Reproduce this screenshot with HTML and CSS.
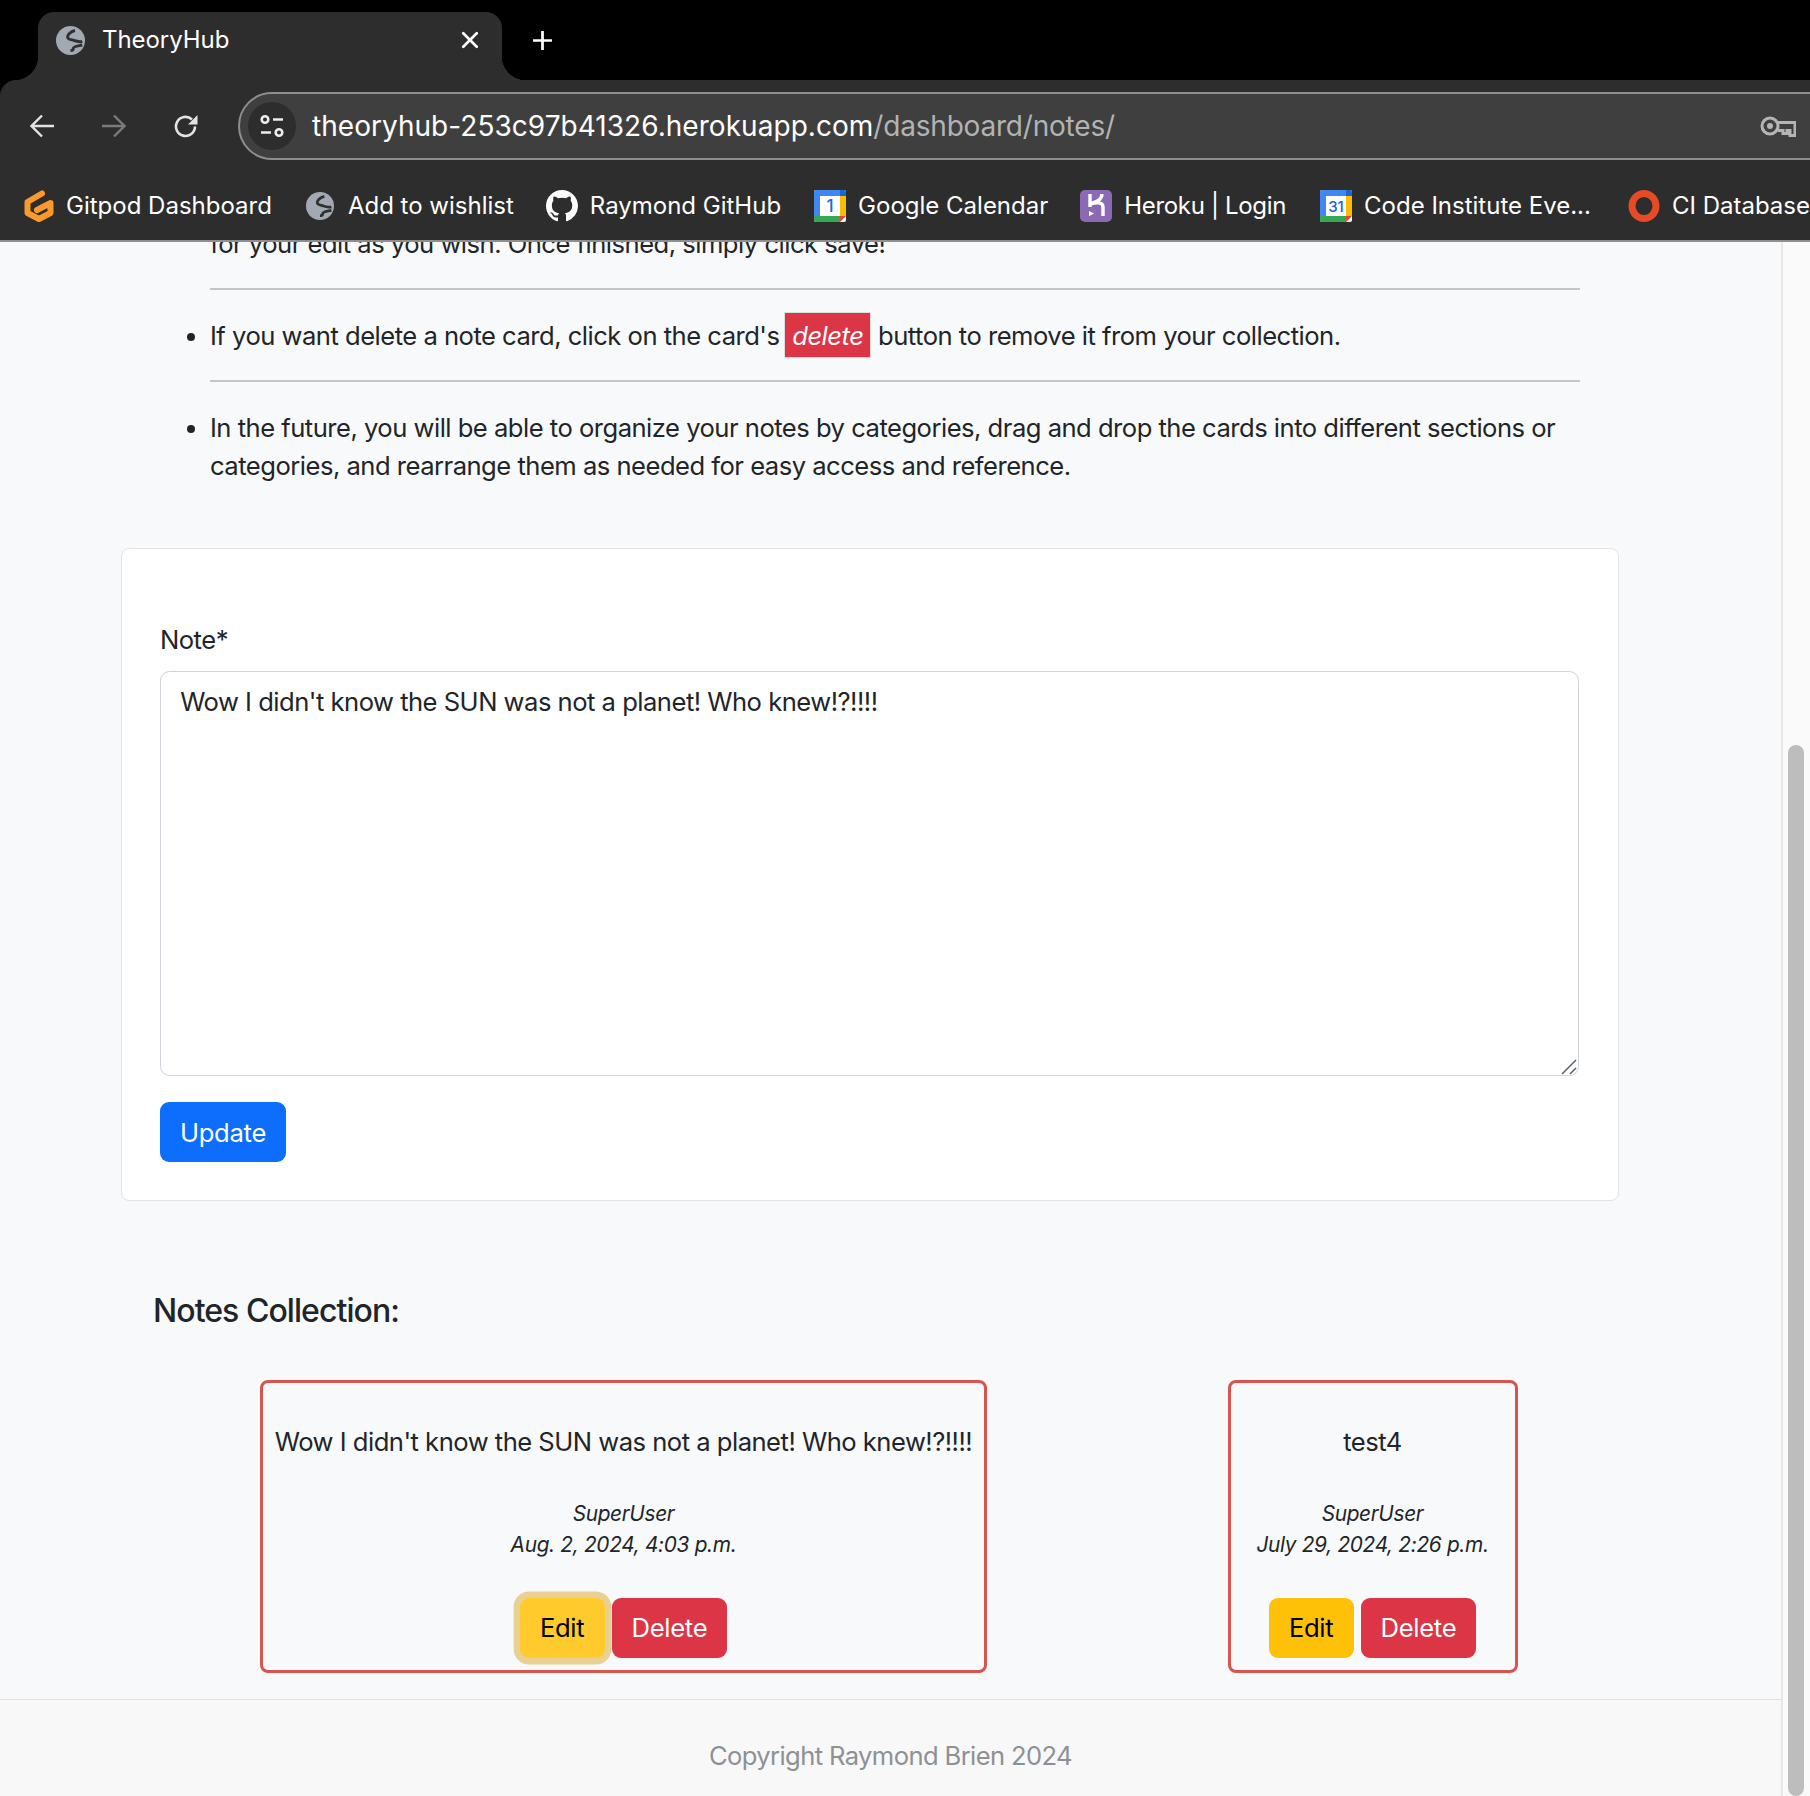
FILE: index.html
```html
<!DOCTYPE html>
<html lang="en">
<head>
<meta charset="utf-8">
<title>TheoryHub</title>
<link rel="stylesheet" href="styles.css">
</head>
<body>
<svg class="defs" width="0" height="0" aria-hidden="true">
  <symbol id="globe" viewBox="0 0 32 32">
    <circle cx="16" cy="16" r="16" fill="#a3a9b2"/>
    <path d="M21 5c-5 1-9 5-8 8 1 2 4 2 7 3 4 1 6 2 9 1M29 21c-4 1-10 1-10 4 0 1-1 2-3 2" fill="none" stroke="#2f3032" stroke-width="3.200"/>
  </symbol>
</svg>
<header class="chrome">
  <div class="tabstrip">
    <div class="tab">
      <svg class="tab-favicon"><use href="#globe"/></svg>
      <span class="tab-title">TheoryHub</span>
      <svg class="tab-close" viewBox="0 0 16 16"><path d="M2 2l12 12M14 2L2 14" stroke="#fff" stroke-width="2.400" stroke-linecap="round"/></svg>
    </div>
    <svg class="new-tab" viewBox="0 0 20 20"><path d="M10 1v18M1 10h18" stroke="#fff" stroke-width="2.600"/></svg>
  </div>
  <div class="toolbar">
    <svg class="nav-icon" viewBox="0 0 24 24"><path d="M24 12H2M12 1.500 1.500 12 12 22.500" fill="none" stroke="#e3e3e3" stroke-width="2.400"/></svg>
    <svg class="nav-icon nav-gap" viewBox="0 0 24 24"><path d="M0 12h22M12 1.500 22.500 12 12 22.500" fill="none" stroke="#7b7b7b" stroke-width="2.400"/></svg>
    <svg class="nav-icon nav-gap" viewBox="0 0 24 24"><path d="M21 12.500a9.500 9.500 0 1 1-3-7" fill="none" stroke="#e3e3e3" stroke-width="2.600"/><path d="M23.500 1v9.500h-9.500z" fill="#e3e3e3"/></svg>
    <div class="urlbar">
      <span class="site-chip">
        <svg viewBox="0 0 24 24" width="24" height="24"><circle cx="5" cy="5.500" r="3.300" fill="none" stroke="#ececec" stroke-width="2.600"/><path d="M13 5.500h10M1 18.500h10" stroke="#ececec" stroke-width="2.600"/><circle cx="19" cy="18.500" r="3.300" fill="none" stroke="#ececec" stroke-width="2.600"/></svg>
      </span>
      <span class="url"><span class="url-host">theoryhub-253c97b41326.herokuapp.com</span><span class="url-path">/dashboard/notes/</span></span>
      <svg class="key" viewBox="0 0 36 22"><circle cx="10" cy="11" r="8" fill="none" stroke="#b5b5b5" stroke-width="3"/><circle cx="10" cy="11" r="3" fill="#b5b5b5"/><path d="M18 7.500h17v13h-5v-5h-3v3h-4v-3h-5" fill="none" stroke="#b5b5b5" stroke-width="3"/></svg>
    </div>
  </div>
  <nav class="bookmarks">
    <a class="bm bm-gitpod">
      <svg class="bm-icon bm-gp-icon" viewBox="0 0 30 32"><path d="M18 3.500 3.500 12v11L15 29l11.500-6v-10L13 20" fill="none" stroke="#fb9a2c" stroke-width="6" stroke-linecap="round" stroke-linejoin="round"/></svg>
      <span>Gitpod Dashboard</span>
    </a>
    <a class="bm bm-wish"><svg class="bm-icon bm-globe"><use href="#globe"/></svg><span>Add to wishlist</span></a>
    <a class="bm bm-gh">
      <svg class="bm-icon" viewBox="0 0 16 16"><path fill="#fff" d="M8 0C3.58 0 0 3.58 0 8c0 3.54 2.29 6.53 5.47 7.59.4.07.55-.17.55-.38 0-.19-.01-.82-.01-1.49-2.01.37-2.53-.49-2.69-.94-.09-.23-.48-.94-.82-1.13-.28-.15-.68-.52-.01-.53.63-.01 1.08.58 1.23.82.72 1.21 1.87.87 2.33.66.07-.52.28-.87.51-1.07-1.78-.2-3.64-.89-3.64-3.95 0-.87.31-1.59.82-2.15-.08-.2-.36-1.02.08-2.12 0 0 .67-.21 2.2.82.64-.18 1.32-.27 2-.27.68 0 1.36.09 2 .27 1.53-1.04 2.2-.82 2.2-.82.44 1.1.16 1.92.08 2.12.51.56.82 1.27.82 2.15 0 3.07-1.87 3.75-3.65 3.95.29.25.54.73.54 1.48 0 1.07-.01 1.93-.01 2.2 0 .21.15.46.55.38A8.013 8.013 0 0016 8c0-4.42-3.58-8-8-8z"/></svg>
      <span>Raymond GitHub</span>
    </a>
    <a class="bm bm-cal">
      <svg class="bm-icon" viewBox="0 0 32 32"><rect width="32" height="32" rx="2" fill="#fff"/><path d="M6 0h20v6H6z" fill="#4285f4"/><path d="M26 0h4a2 2 0 0 1 2 2v4h-6z" fill="#1967d2"/><path d="M0 2a2 2 0 0 1 2-2h4v26H0z" fill="#4285f4"/><path d="M26 6h6v20h-6z" fill="#fbbc04"/><path d="M6 26h20v6H2a2 2 0 0 1-2-2v-4h6z" fill="#34a853"/><path d="M26 26h6l-6 6z" fill="#ea4335"/><text class="cal-num" x="16" y="22" text-anchor="middle">1</text></svg>
      <span>Google Calendar</span>
    </a>
    <a class="bm bm-her">
      <svg class="bm-icon" viewBox="0 0 32 32"><rect width="32" height="32" rx="5" fill="#8b69b4"/><path d="M10 4v13M22 4c0 6-6 8-12 10M10 14c7-2 13-2 13 3v9" fill="none" stroke="#fff" stroke-width="3.400"/><path d="M9 21l5 2.500L9 26z" fill="#fff"/></svg>
      <span class="bm-her-label">Heroku | Login</span>
    </a>
    <a class="bm bm-cal2">
      <svg class="bm-icon" viewBox="0 0 32 32"><rect width="32" height="32" rx="2" fill="#fff"/><path d="M6 0h20v6H6z" fill="#4285f4"/><path d="M26 0h4a2 2 0 0 1 2 2v4h-6z" fill="#1967d2"/><path d="M0 2a2 2 0 0 1 2-2h4v26H0z" fill="#4285f4"/><path d="M26 6h6v20h-6z" fill="#fbbc04"/><path d="M6 26h20v6H2a2 2 0 0 1-2-2v-4h6z" fill="#34a853"/><path d="M26 26h6l-6 6z" fill="#ea4335"/><text class="cal-num cal-num-two" x="16" y="22" text-anchor="middle">31</text></svg>
      <span>Code Institute Eve...</span>
    </a>
    <a class="bm bm-ci">
      <svg class="bm-icon" viewBox="0 0 32 32"><ellipse cx="16" cy="16" rx="12" ry="12.500" fill="none" stroke="#e64a26" stroke-width="7"/></svg>
      <span>CI Database</span>
    </a>
  </nav>
</header>

<div class="viewport">
  <div class="page">
    <main class="content">
      <ul class="instructions">
        <li class="item-continued">for your edit as you wish. Once finished, simply click save!<hr class="rule"></li>
        <li>If you want delete a note card, click on the card's <span class="badge-delete">delete</span> button to remove it from your collection.<hr class="rule rule-tight"></li>
        <li>In the future, you will be able to organize your notes by categories, drag and drop the cards into different sections or categories, and rearrange them as needed for easy access and reference.</li>
      </ul>
      <form class="note-form">
        <label class="note-label" for="note">Note*</label>
        <div class="note-field">
          <textarea class="note-input" id="note">Wow I didn't know the SUN was not a planet! Who knew!?!!!!</textarea>
          <svg class="resize-grip" viewBox="0 0 16 16"><path d="M1 15 15 1M9 15l6-6" stroke="#5f6164" stroke-width="1.500"/></svg>
        </div>
        <button class="btn btn-blue" type="button">Update</button>
      </form>
      <h5 class="collection-title">Notes Collection:</h5>
      <section class="notes">
        <article class="note">
          <p class="note-text">Wow I didn't know the SUN was not a planet! Who knew!?!!!!</p>
          <p class="note-meta">SuperUser<br>Aug. 2, 2024, 4:03 p.m.</p>
          <div class="note-actions">
            <button class="btn btn-yellow btn-focus" type="button">Edit</button>
            <button class="btn btn-red" type="button">Delete</button>
          </div>
        </article>
        <article class="note">
          <p class="note-text">test4</p>
          <p class="note-meta">SuperUser<br>July 29, 2024, 2:26 p.m.</p>
          <div class="note-actions">
            <button class="btn btn-yellow" type="button">Edit</button>
            <button class="btn btn-red" type="button">Delete</button>
          </div>
        </article>
      </section>
    </main>
    <footer class="footer">Copyright Raymond Brien 2024</footer>
  </div>
  <div class="scrollbar"><div class="thumb"></div></div>
</div>
</body>
</html>
```
FILE: styles.css
```css
* { box-sizing: border-box; }
html, body { margin: 0; height: 100%; }
body {
  width: 1810px;
  height: 1796px;
  overflow: hidden;
  display: flex;
  flex-direction: column;
  background: #f8f9fa;
  color: #212529;
  font-family: Inter, "Liberation Sans", sans-serif;
  font-size: 25.6px;
  line-height: 38.4px;
  letter-spacing: -0.51px;
}
.defs { position: absolute; }

/* Browser chrome */
.chrome { flex: none; background: #000; }
.tabstrip {
  height: 80px;
  display: flex;
  align-items: flex-end;
  padding-left: 38px;
  background: #000;
}
.tab {
  position: relative;
  width: 464px;
  height: 68px;
  background: #2d2d2d;
  border-radius: 16px 16px 0 0;
  display: flex;
  align-items: center;
  padding: 0 23px 12px 18px;
  color: #fff;
}
.tab::before, .tab::after {
  content: "";
  position: absolute;
  bottom: 0;
  width: 24px;
  height: 24px;
}
.tab::before {
  left: -24px;
  background: radial-gradient(circle at 0 0, transparent 24px, #2d2d2d 24.5px);
}
.tab::after {
  right: -24px;
  background: radial-gradient(circle at 100% 0, transparent 24px, #2d2d2d 24.5px);
}
.tab-favicon { width: 29px; height: 29px; flex: none; }
.tab-title { margin-left: 17px; flex: 1; font-size: 24px; letter-spacing: -0.05px; }
.tab-close { width: 18px; height: 18px; flex: none; }
.new-tab { width: 21px; height: 21px; margin: 0 0 29px 30px; }

.toolbar {
  height: 80px;
  padding: 12px 0 0 30px;
  background: #2d2d2d;
  border-radius: 16px 0 0 0;
  display: flex;
  align-items: center;
  overflow: hidden;
}
.nav-icon { width: 24px; height: 24px; flex: none; }
.nav-gap { margin-left: 48px; }
.urlbar {
  flex: 1;
  height: 68px;
  margin: 0 -40px 0 40px;
  padding: 0 52px 0 8px;
  display: flex;
  align-items: center;
  background: #3f3f3f;
  border: 2px solid #8e8e8e;
  border-radius: 34px;
}
.site-chip {
  width: 48px;
  height: 48px;
  flex: none;
  border-radius: 50%;
  background: #2d2d2d;
  display: flex;
  align-items: center;
  justify-content: center;
}
.url { flex: 1; margin-left: 16px; font-size: 28px; letter-spacing: 0; white-space: nowrap; }
.url-host { color: #fff; letter-spacing: 0.04px; }
.url-path { color: #b3b3b3; letter-spacing: -0.2px; }
.key { width: 36px; height: 22px; flex: none; }

.bookmarks {
  height: 82px;
  padding-top: 12px;
  background: #2d2d2d;
  border-bottom: 2px solid #8f8f8f;
  display: flex;
  align-items: center;
  overflow: hidden;
  color: #fff;
  font-size: 24px;
  letter-spacing: 0;
  white-space: nowrap;
}
.bm { display: flex; align-items: center; flex: none; }
.bm-icon { width: 32px; height: 32px; flex: none; margin-right: 12px; }
.bm-gp-icon { width: 30px; }
.bm-globe { width: 28px; height: 28px; margin-right: 14px; }
.bm-gitpod { margin-left: 24px; }
.bm-wish { margin-left: 34px; }
.bm-gh { margin-left: 32px; }
.bm-cal { margin-left: 33px; }
.bm-her { margin-left: 32px; }
.bm-her-label { letter-spacing: -0.33px; }
.bm-cal2 { margin-left: 34px; }
.bm-ci { margin-left: 37px; }
.cal-num { font-size: 17px; font-family: Inter, sans-serif; fill: #1967d2; font-weight: 500; letter-spacing: 0; }
.cal-num-two { font-size: 15px; }

/* Web page */
.viewport { flex: 1; min-height: 0; display: flex; overflow: hidden; }
.page { width: 1781px; flex: none; display: flex; flex-direction: column; overflow: hidden; }
.content { flex: 1; padding: 0 162px 0 121px; }
.scrollbar {
  flex: 1;
  border-left: 2px solid #e7e7e7;
  background: #fafafa;
  padding: 503px 6px 0 5px;
}
.thumb { height: 100%; background: #bdbdbd; border-radius: 9px; margin-bottom: -2px; }

.instructions { margin: -17px 0 0; padding: 0 39px 0 89px; }
.item-continued { list-style: none; }
.rule { margin: 25px 0 27px; border: 0; border-top: 2px solid #c4c5c6; opacity: 1; height: 0; }
.rule-tight { margin-top: 24px; }
.badge-delete {
  margin-left: -2px;
  background: #dc3545;
  color: #fff;
  font-style: italic;
  padding: 7px 7px 6px;
  border: 1px solid #dcdfe2;
}

.note-form {
  margin-top: 62px;
  height: 653px;
  padding: 72px 39px 0 38px;
  background: #fff;
  border: 1.6px solid #e1e3e5;
  border-radius: 8px;
}
.note-label { display: block; margin-bottom: 12px; }
.note-field { position: relative; }
.note-input {
  display: block;
  width: 100%;
  height: 405px;
  padding: 10.6px 19.2px;
  color: #212529;
  font: inherit;
  letter-spacing: inherit;
  border: 1.6px solid #ced4da;
  border-radius: 9.6px;
  background: #fff;
  outline: 0;
  resize: none;
}
.resize-grip { position: absolute; right: 2px; bottom: 1px; width: 16px; height: 16px; }
.btn {
  display: inline-block;
  height: 60px;
  padding: 0 20px;
  font: inherit;
  letter-spacing: -0.3px;
  border: 0;
  border-radius: 9px;
}
.note-form .btn { margin-top: 26px; padding-top: 2px; }
.btn-blue { background: #0d6efd; color: #fff; }
.btn-yellow { background: #ffc107; color: #000; padding: 0 20.200px; }
.btn-red { background: #dc3545; color: #fff; }
.btn-focus { background: #ffca2c; box-shadow: 0 0 0 6.400px #e9d194; }

.collection-title {
  margin: 91px 0 0 32px;
  font-size: 32px;
  line-height: 38.4px;
  font-weight: 500;
  letter-spacing: -0.95px;
}
.notes {
  margin: 50px 0 0 128px;
  display: grid;
  grid-template-columns: 749px 749px;
  justify-items: center;
}
.note {
  min-width: 290px;
  height: 293px;
  padding: 40px 12.300px 0;
  border: 3.200px solid #d9534f;
  border-radius: 8px;
  text-align: center;
}
.note-text { margin: 0; white-space: nowrap; }
.note-meta {
  margin: 37px 0 0;
  font-size: 20.800px;
  line-height: 31px;
  font-style: italic;
  letter-spacing: -0.3px;
  white-space: nowrap;
}
.note-actions { margin-top: 38px; display: flex; justify-content: center; gap: 7px; }

.footer {
  height: 97px;
  flex: none;
  padding-top: 37px;
  border-top: 1.600px solid #e0e1e2;
  background: #f8f8f8;
  color: #8e9194;
  letter-spacing: -0.62px;
  text-align: center;
}
```
